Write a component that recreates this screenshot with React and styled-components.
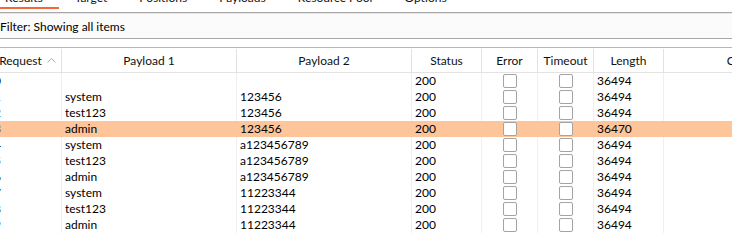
import React from "react";
import styled, { createGlobalStyle } from "styled-components";

const GlobalStyle = createGlobalStyle`
  html, body { margin: 0; padding: 0; background: #ffffff; }
  body { font-family: Lato, "Noto Sans", sans-serif; font-size: 12px; color: #000; }
`;

const Root = styled.div`
  width: 732px;
  height: 246px;
  overflow: hidden;
  background: #ffffff;
`;

const TabStrip = styled.div`
  display: flex;
  margin-top: -10px;
  margin-left: -11px;
  padding-bottom: 3px;
  border-bottom: 1px solid #a8a8a8;
`;

const Tab = styled.div`
  padding: 0 16px;
  height: 17px;
  line-height: 16px;
  color: #111;
  white-space: nowrap;
  border-bottom: 2px solid ${(p) => (p.$active ? "#f0683a" : "transparent")};
`;

const FilterBar = styled.div`
  display: flex;
  align-items: center;
  background: #fbfbfb;
  border-top: 1px solid #e6e6e6;
  border-bottom: 1px solid #a8a8a8;
  color: #000;
  box-sizing: border-box;
  height: 26px;
`;

const TableWrap = styled.div`
  margin-top: 8px;
  margin-left: -6px;
`;

const COLS = "68px 175px 175px 70px 56px 56px 70px 178px";

const HeaderRow = styled.div`
  display: grid;
  grid-template-columns: ${COLS};
  height: 24px;
  border-top: 1px solid #9fbddb;
  border-bottom: 1px solid #e3e3e3;
`;

const HeaderCell = styled.div`
  display: flex;
  align-items: center;
  justify-content: center;
  gap: 5px;
  color: #111;
  border-right: 1px solid #e2e2e2;
  margin: 1px 0 0;
  white-space: nowrap;
  overflow: hidden;
`;

const SortArrow = styled.svg`
  width: 9px;
  height: 5px;
  flex: none;
`;

const Row = styled.div`
  display: grid;
  grid-template-columns: ${COLS};
  height: 16px;
  background: ${(p) => (p.$selected ? "#fec49a" : "transparent")};
`;

const Cell = styled.div`
  display: flex;
  align-items: center;
  justify-content: ${(p) => (p.$center ? "center" : "flex-start")};
  padding-left: ${(p) => (p.$center ? 0 : p.$flush ? 0 : 3)}px;
  border-right: 1px solid ${(p) => (p.$selected ? "transparent" : "#efefef")};
  line-height: 16px;
  white-space: nowrap;
  overflow: hidden;
  box-sizing: border-box;
`;

const Check = styled.span`
  display: block;
  width: 14px;
  height: 14px;
  box-sizing: border-box;
  border: 1px solid #a4a4a4;
  border-radius: 2px;
  background: #ffffff;
`;

const tabs = ["Results", "Target", "Positions", "Payloads", "Resource Pool", "Options"];

const rows = [
  ["0", "", "", "200", "36494"],
  ["1", "system", "123456", "200", "36494"],
  ["2", "test123", "123456", "200", "36494"],
  ["3", "admin", "123456", "200", "36470"],
  ["4", "system", "a123456789", "200", "36494"],
  ["5", "test123", "a123456789", "200", "36494"],
  ["6", "admin", "a123456789", "200", "36494"],
  ["7", "system", "11223344", "200", "36494"],
  ["8", "test123", "11223344", "200", "36494"],
  ["9", "admin", "11223344", "200", "36494"],
];

export default function App() {
  return (
    <Root>
      <GlobalStyle />
      <TabStrip>
        {tabs.map((t, i) => (
          <Tab key={t} $active={i === 0}>{t}</Tab>
        ))}
      </TabStrip>
      <FilterBar>Filter: Showing all items</FilterBar>
      <TableWrap>
        <HeaderRow>
          <HeaderCell>
            Request
            <SortArrow viewBox="0 0 9 5">
              <path d="M0.5 4.5 L4.5 0.5 L8.5 4.5" fill="none" stroke="#a8a8a8" strokeWidth="1" />
            </SortArrow>
          </HeaderCell>
          <HeaderCell>Payload 1</HeaderCell>
          <HeaderCell>Payload 2</HeaderCell>
          <HeaderCell>Status</HeaderCell>
          <HeaderCell>Error</HeaderCell>
          <HeaderCell>Timeout</HeaderCell>
          <HeaderCell>Length</HeaderCell>
          <HeaderCell>Comment</HeaderCell>
        </HeaderRow>
        {rows.map((r) => {
          const sel = r[0] === "3";
          return (
            <Row key={r[0]} $selected={sel}>
              <Cell $selected={sel} $flush>{r[0]}</Cell>
              <Cell $selected={sel}>{r[1]}</Cell>
              <Cell $selected={sel}>{r[2]}</Cell>
              <Cell $selected={sel}>{r[3]}</Cell>
              <Cell $selected={sel} $center><Check /></Cell>
              <Cell $selected={sel} $center><Check /></Cell>
              <Cell $selected={sel}>{r[4]}</Cell>
              <Cell $selected={sel}></Cell>
            </Row>
          );
        })}
      </TableWrap>
    </Root>
  );
}
